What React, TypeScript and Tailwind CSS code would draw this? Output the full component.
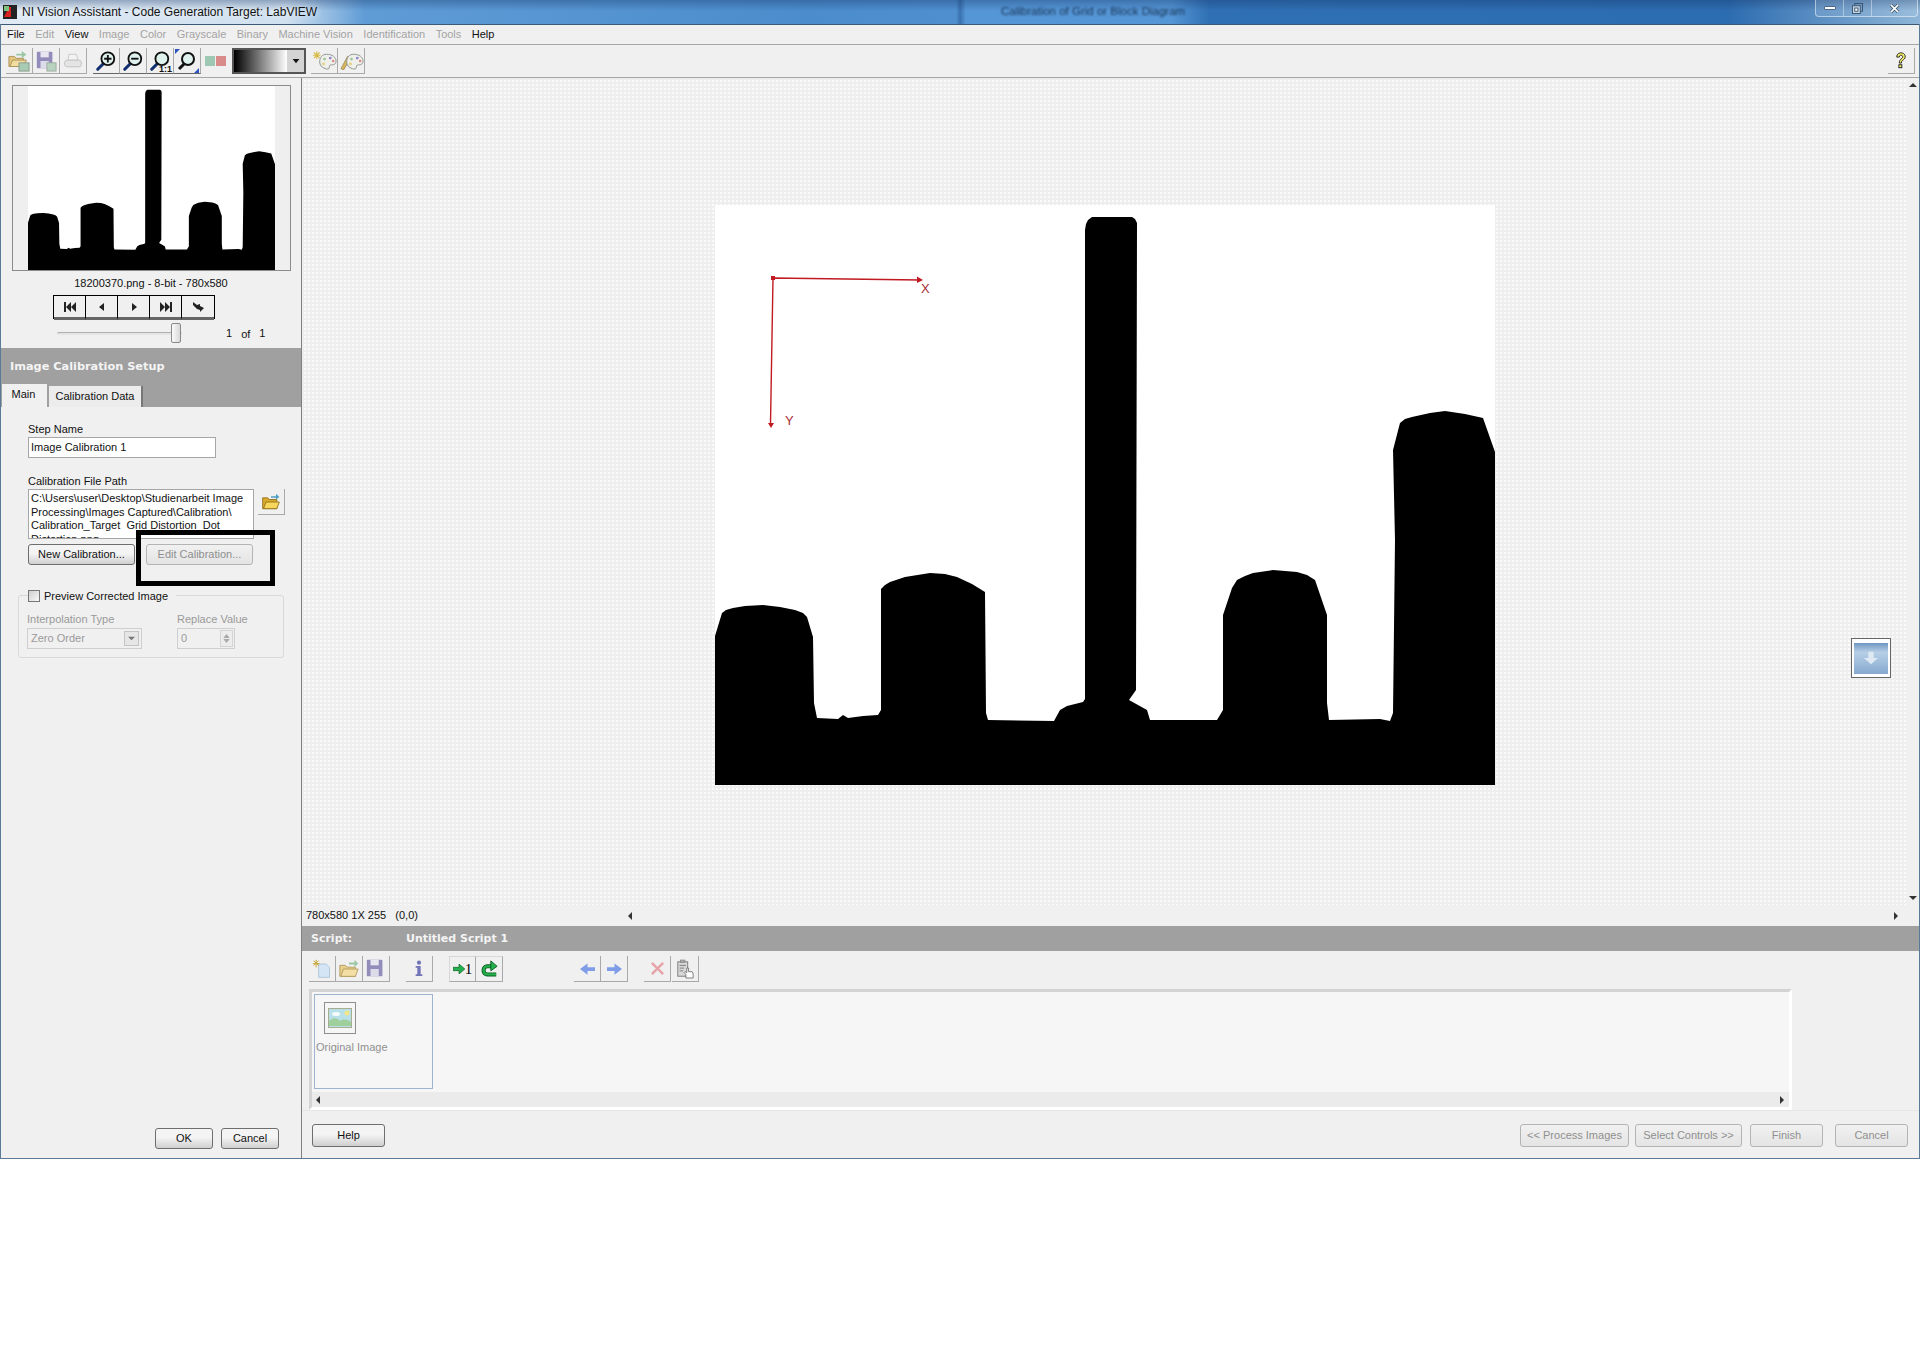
import type { ReactNode } from "react";

const SHAPE =
  "715,785 715,636 722,613 726,610 733,608 745,606 763,605 780,607 795,610 803,613 807,617 813,637 814,703 817,718 838,719 843,715 848,718 863,716 878,715 881,710 881,589 885,585 890,582 905,577 930,573 945,574 957,577 972,584 985,592 986,713 988,720 1054,721 1060,710 1067,706 1083,702 1085,699 1085,230 1086,224 1088,220 1092,217 1132,217 1135,219 1137,223 1136,690 1129,700 1147,710 1150,720 1217,720 1223,710 1223,615 1232,588 1237,580 1245,576 1253,573 1273,570 1297,572 1307,575 1315,580 1327,615 1327,703 1329,720 1380,719 1390,721 1393,713 1395,540 1393,450 1400,423 1405,419 1412,417 1430,413 1445,411 1465,414 1483,418 1495,452 1495,785";

const MENU = [
  { label: "File", on: true },
  { label: "Edit" },
  { label: "View", on: true },
  { label: "Image" },
  { label: "Color" },
  { label: "Grayscale" },
  { label: "Binary" },
  { label: "Machine Vision" },
  { label: "Identification" },
  { label: "Tools" },
  { label: "Help", on: true },
];

function Silhouette() {
  return (
    <svg viewBox="715 205 780 580" className="block h-full w-full" preserveAspectRatio="none">
      <rect x="715" y="205" width="780" height="580" fill="#fff" />
      <polygon points={SHAPE} fill="#000" />
    </svg>
  );
}

function ToolBtn({ children, className = "w-[27px]" }: { children?: ReactNode; className?: string }) {
  return (
    <div className={`flex h-[26px] shrink-0 items-center justify-center border-r border-b border-[#a9a9a9] ${className}`}>
      {children}
    </div>
  );
}

function Lens({ children }: { children?: ReactNode }) {
  return (
    <svg viewBox="0 0 24 24" className="h-[22px] w-[22px]">
      <path d="M9 15 3 21" stroke="#12306f" strokeWidth="3.4" strokeLinecap="round" />
      <circle cx="14" cy="9.5" r="7" fill="#dff2ee" stroke="#111" strokeWidth="2" />
      {children}
    </svg>
  );
}

function FolderIcon() {
  return (
    <svg viewBox="0 0 24 24" className="h-[22px] w-[22px]">
      <path d="M2 8h6l2 2h9v10H2z" fill="#e9cf8a" stroke="#b49c60" />
      <path d="M3 20 6 12h16l-3 8z" fill="#f3dfa4" stroke="#b49c60" />
      <path d="M12 5h6V2l4 4-4 4V7h-6z" fill="#9cc7a4" />
    </svg>
  );
}

function FloppyIcon({ pic }: { pic?: boolean }) {
  return (
    <svg viewBox="0 0 24 24" className="h-[22px] w-[22px] opacity-80">
      <rect x="2" y="2" width="17" height="18" fill="#7b74ad" rx="1" />
      <rect x="6" y="2" width="9" height="6" fill="#e6e4f2" />
      <rect x="6" y="12" width="9" height="8" fill="#d8d6e8" />
      {pic && <rect x="13" y="14" width="10" height="9" fill="#a9cbb4" stroke="#8a9a8a" />}
    </svg>
  );
}

function PictureIcon({ className }: { className: string }) {
  return (
    <svg viewBox="0 0 24 20" className={className}>
      <rect x="0.5" y="0.5" width="23" height="19" fill="#b9e0e8" stroke="#a8ad90" />
      <circle cx="19" cy="5" r="2.5" fill="#f1e68a" />
      <ellipse cx="8" cy="6" rx="4" ry="2" fill="#f5fbfb" />
      <path d="M1 18V13c5-4 8-3 11 0 3-2 7-2 11 1v4z" fill="#9fd09c" />
    </svg>
  );
}

function PaletteIcon({ pen }: { pen?: boolean }) {
  return (
    <svg viewBox="0 0 26 22" className="h-[22px] w-[25px]">
      {pen ? (
        <path d="M2 19 9 6l3 2-7 12z" fill="#d8b65c" stroke="#8b7a4a" strokeWidth="0.7" />
      ) : (
        <path d="M5 1v8M1 5h8M2 2l6 6M8 2 2 8" stroke="#d8bb45" strokeWidth="1.2" />
      )}
      <path d="M15 4c6 0 10 3 10 7s-3 4-5 4-2 2-2 3-2 2-4 1c-4-1-6-4-6-7 0-5 3-8 7-8z" fill="#f0f0ea" stroke="#8d9490" />
      <circle cx="19" cy="8" r="1.5" fill="#8f8ad0" />
      <circle cx="22" cy="11" r="1.3" fill="#d88" />
      <circle cx="13" cy="9" r="1.5" fill="#9ac79a" />
      <circle cx="12" cy="14" r="1.5" fill="#e2cf80" />
    </svg>
  );
}

function NavBtn({ d, last }: { d: string; last?: boolean }) {
  return (
    <div className={`flex h-[24px] w-[32px] items-center justify-center bg-[#f0f0f0] border-b-[3px] border-b-[#666] ${last ? "" : "border-r border-r-black"}`}>
      <svg viewBox="0 0 14 12" className="h-[12px] w-[14px]">
        <path d={d} fill="#222" />
      </svg>
    </div>
  );
}

function PushBtn({ label, className, off }: { label: string; className: string; off?: boolean }) {
  return (
    <div
      className={`flex items-center justify-center rounded-[3px] border ${
        off
          ? "border-[#b4b4b4] bg-[linear-gradient(#f1f1f1,#e4e4e4)] text-[#8f8f8f]"
          : "border-[#6e6e6e] bg-[linear-gradient(#f4f4f4_45%,#cfcfcf)] text-[#111]"
      } ${className}`}
    >
      {label}
    </div>
  );
}

function ScrollTip({ dir }: { dir: "l" | "r" | "u" | "d" }) {
  const d = { l: "M6 1v8L2 5z", r: "M3 1v8l4-4z", u: "M1 7h8L5 3z", d: "M1 3h8L5 7z" }[dir];
  return (
    <svg viewBox="0 0 10 10" className="h-[10px] w-[10px] shrink-0">
      <path d={d} fill="#333" />
    </svg>
  );
}

function LeftPanel() {
  return (
    <aside className="flex w-[301px] shrink-0 flex-col border-r border-[#808080] bg-[#f0f0f0]">
      {/* Thumbnail */}
      <div className="mx-[11px] mt-[7px] flex h-[186px] w-[279px] justify-center border border-[#8b8b8b] bg-[#efefef]">
        <div className="h-full w-[247px]">
          <Silhouette />
        </div>
      </div>
      <div className="flex h-[24px] items-center justify-center">18200370.png - 8-bit - 780x580</div>
      <div className="ml-[52px] flex h-[24px] w-[162px] border border-black">
        <NavBtn d="M1 1h2v10H1zM8 1v10L3 6zM13 1v10L8 6z" />
        <NavBtn d="M9 2v8L4 6z" />
        <NavBtn d="M5 2v8l5-4z" />
        <NavBtn d="M1 1v10l5-5zM6 1v10l5-5zM11 1h2v10h-2z" />
        <NavBtn last d="M2 1 6 4 9 3v2l4 2-4 4V9L6 8 2 4z" />
      </div>
      <div className="flex h-[29px] items-center pl-[56px]">
        <div className="relative h-[3px] w-[125px] rounded-full border-t border-[#b0b0b0] bg-[#e4e4e4]">
          <div className="absolute top-[-10px] left-[114px] h-[20px] w-[10px] rounded-[2px] border border-[#8a8a8a] bg-[linear-gradient(90deg,#fafafa,#d8d8d8)]" />
        </div>
        <span className="ml-[44px]">1</span>
        <span className="ml-[9px] mt-[2px]">of</span>
        <span className="ml-[9px]">1</span>
      </div>

      {/* Step header */}
      <div className="flex h-[59px] flex-col bg-[#a0a0a0]">
        <div className="flex h-[36px] items-center pt-[2px] pl-[9px] font-['DejaVu_Sans'] text-[11.3px] font-bold text-[#f4f4f4]">
          Image Calibration Setup
        </div>
        <div className="flex flex-1 items-end pl-[1px]">
          <div className="flex h-[23px] w-[45px] items-center justify-center bg-[#f0f0f0] pr-[2px] pb-[3px]">Main</div>
          <div className="ml-[2px] flex h-[21px] w-[94px] items-center justify-center border-r-2 border-[#777] bg-[#ececec]">
            Calibration Data
          </div>
        </div>
      </div>

      {/* Form */}
      <div className="relative flex flex-1 flex-col px-[27px]">
        <div className="mt-[15px] h-[14px] leading-[14px]">Step Name</div>
        <div className="mt-px flex h-[21px] w-[188px] items-center border border-[#a6a6a6] bg-white pl-[2px]">Image Calibration 1</div>
        <div className="mt-[16px] h-[14px] leading-[14px]">Calibration File Path</div>
        <div className="mt-px flex gap-[4px]">
          <div className="h-[50px] w-[226px] shrink-0 overflow-hidden border border-[#a6a6a6] bg-white pt-[2px] pl-[2px] leading-[13.500px] whitespace-nowrap">
            <div>C:\Users\user\Desktop\Studienarbeit Image</div>
            <div>Processing\Images Captured\Calibration\</div>
            <div>Calibration_Target&nbsp; Grid Distortion&nbsp; Dot</div>
            <div>Distortion.png</div>
          </div>
          <div className="flex h-[26px] w-[27px] shrink-0 items-center justify-center border-r border-b border-[#a9a9a9]">
            <svg viewBox="0 0 24 24" className="h-[20px] w-[20px]">
              <path d="M2 7h6l2 2h9v11H2z" fill="#d9a92c" stroke="#8a6a14" />
              <path d="M3 20 6 12h16l-3 8z" fill="#f6d65c" stroke="#8a6a14" />
              <path d="M12 5h6V2l4 4-4 3V7h-6z" fill="#4f9fc4" />
            </svg>
          </div>
        </div>
        <div className="mt-[5px] flex gap-[10px]">
          <PushBtn label="New Calibration..." className="h-[21px] w-[107px]" />
          <PushBtn off label="Edit Calibration..." className="ml-px h-[21px] w-[107px]" />
        </div>

        {/* Annotation drawn over the dialog */}
        <div className="absolute top-[123px] left-[135px] h-[56px] w-[139px] border-[5px] border-black" />

        <div className="mt-[30px] -ml-[10px] h-[63px] w-[266px] rounded-[3px] border border-[#d9d9d9]">
          <div className="-mt-[8px] ml-[9px] flex w-fit items-center gap-[4px] bg-[#f0f0f0] pr-[8px]">
            <div className="h-[12px] w-[12px] border border-[#777] bg-[linear-gradient(135deg,#cfcfcf,#f8f8f8)]" />
            <span>Preview Corrected Image</span>
          </div>
          <div className="mt-[7px] ml-[8px] flex gap-[35px] text-[#9a9a9a]">
            <div className="w-[115px]">
              <div className="h-[14px] leading-[14px]">Interpolation Type</div>
              <div className="mt-[2px] flex h-[21px] items-center justify-between border border-[#cfcfcf] pl-[3px]">
                Zero Order
                <div className="mr-[2px] flex h-[15px] w-[15px] items-center justify-center border border-[#c4c4c4] bg-[#e6e6e6]">
                  <svg viewBox="0 0 8 8" className="h-[7px] w-[7px]"><path d="M0 2h8L4 6z" fill="#777" /></svg>
                </div>
              </div>
            </div>
            <div className="w-[58px]">
              <div className="h-[14px] leading-[14px] whitespace-nowrap">Replace Value</div>
              <div className="mt-[2px] flex h-[21px] items-center justify-between border border-[#cfcfcf] pl-[3px]">
                0
                <div className="mr-px flex h-[17px] w-[13px] flex-col items-center justify-center gap-px border border-[#d4d4d4] bg-[#ececec]">
                  <svg viewBox="0 0 8 5" className="h-[4px] w-[7px]"><path d="M0 5h8L4 0z" fill="#aaa" /></svg>
                  <svg viewBox="0 0 8 5" className="h-[4px] w-[7px]"><path d="M0 0h8L4 5z" fill="#aaa" /></svg>
                </div>
              </div>
            </div>
          </div>
        </div>

        <div className="mt-auto mb-[9px] -mr-[5px] flex justify-end gap-[8px]">
          <PushBtn label="OK" className="h-[21px] w-[58px]" />
          <PushBtn label="Cancel" className="h-[21px] w-[58px]" />
        </div>
      </div>
    </aside>
  );
}

function Canvas() {
  return (
    <div className="flex min-h-0 flex-1">
      <div className="relative flex flex-1 items-center justify-center bg-[linear-gradient(90deg,#eeeeee_50%,transparent_50%),linear-gradient(#eeeeee_50%,#fbfbfb_50%)] bg-[length:4px_4px] pt-[7px] pl-[2px]">
        <div className="h-[580px] w-[780px]">
          <svg viewBox="715 205 780 580" className="block h-full w-full">
            <polygon points="715,205 1495,205 1495,785 715,785" fill="#fff" />
            <polygon points={SHAPE} fill="#000" />
            <g stroke="#c01a22" strokeWidth="1.4" fill="#c01a22">
              <path d="M773 278 920 280M773 278 770.5 424" fill="none" />
              <rect x="771" y="276" width="4" height="4" stroke="none" />
              <path d="M917 276.5 923 280 917 283z" stroke="none" />
              <path d="M768 423h6l-3 5z" stroke="none" />
            </g>
            <text x="921" y="293" fontSize="13" fill="#a83038" fontFamily="Liberation Sans, sans-serif">X</text>
            <text x="785" y="425" fontSize="13" fill="#a83038" fontFamily="Liberation Sans, sans-serif">Y</text>
          </svg>
        </div>
        {/* Floating panel toggle */}
        <div className="absolute top-[560px] right-[15px] flex h-[40px] w-[40px] items-center justify-center border border-[#666] bg-white">
          <div className="flex h-[31px] w-[34px] items-center justify-center bg-[linear-gradient(#6f97c4,#b7cfe6_30%,#86a9d0)]">
            <svg viewBox="0 0 18 18" className="h-[16px] w-[18px]">
              <path d="M6 2h6v7h5l-8 7-8-7h5z" fill="#dfe9f3" />
            </svg>
          </div>
        </div>
      </div>
      <div className="flex w-[13px] flex-col items-center justify-between bg-[#f0f0f0] py-[2px]">
        <ScrollTip dir="u" />
        <ScrollTip dir="d" />
      </div>
    </div>
  );
}

function ScriptTools() {
  return (
    <div className="flex h-[38px] shrink-0 items-start pt-[5px] pl-[7px]">
      <ToolBtn>
        <svg viewBox="0 0 24 24" className="h-[20px] w-[20px]">
          <path d="M8 6h9l4 4v12H8z" fill="#d4e6f5" stroke="#a9bfd3" />
          <path d="M5 1v9M1 5.500h8M2 2l6 6M8 2 2 8" stroke="#c7a83a" strokeWidth="1.2" />
        </svg>
      </ToolBtn>
      <ToolBtn><FolderIcon /></ToolBtn>
      <ToolBtn><FloppyIcon /></ToolBtn>
      <ToolBtn className="ml-[16px] w-[27px]">
        <svg viewBox="0 0 12 20" className="h-[17px] w-[10px]">
          <circle cx="6" cy="3" r="2.500" fill="#7274b8" />
          <path d="M2 7h6v10h2v2H2v-2h2V9H2z" fill="#7274b8" />
        </svg>
      </ToolBtn>
      <ToolBtn className="ml-[16px] w-[27px] border-t border-l border-t-[#d8d8d8] border-l-[#d8d8d8]">
        <div className="flex items-center">
          <svg viewBox="0 0 14 12" className="h-[10px] w-[12px]"><path d="M0 4h7V0l7 6-7 6V8H0z" fill="#22b14c" stroke="#0a5a1f" strokeWidth="0.8" /></svg>
          <span className="font-['Liberation_Serif'] text-[15px] leading-none text-black">1</span>
        </div>
      </ToolBtn>
      <ToolBtn className="w-[27px] border-t border-t-[#d8d8d8]">
        <svg viewBox="0 0 20 20" className="h-[18px] w-[18px]">
          <path d="M15 7H8a4 4 0 0 0-4 4v1a4 4 0 0 0 4 4h10" fill="none" stroke="#0a5a1f" strokeWidth="4.500" />
          <path d="M15 7H8a4 4 0 0 0-4 4v1a4 4 0 0 0 4 4h10" fill="none" stroke="#22b14c" strokeWidth="2.500" />
          <path d="M12 1l7 6-7 5z" fill="#22b14c" stroke="#0a5a1f" />
        </svg>
      </ToolBtn>
      <ToolBtn className="ml-[71px] w-[27px]">
        <svg viewBox="0 0 16 12" className="h-[12px] w-[15px]"><path d="M16 4H8V0L0 6l8 6V8h8z" fill="#7f9ce8" /></svg>
      </ToolBtn>
      <ToolBtn className="w-[27px]">
        <svg viewBox="0 0 16 12" className="h-[12px] w-[15px]"><path d="M0 4h8V0l8 6-8 6V8H0z" fill="#7f9ce8" /></svg>
      </ToolBtn>
      <ToolBtn className="ml-[16px] w-[27px]">
        <svg viewBox="0 0 16 16" className="h-[15px] w-[15px]"><path d="M2 2l12 12M14 2 2 14" stroke="#e6a3a8" strokeWidth="2.600" /></svg>
      </ToolBtn>
      <ToolBtn className="ml-px w-[27px]">
        <svg viewBox="0 0 20 22" className="h-[20px] w-[18px]">
          <rect x="2" y="3" width="11" height="16" fill="#d8d8d8" stroke="#777" />
          <rect x="5" y="1" width="5" height="3" fill="#aaa" stroke="#777" strokeWidth="0.6" />
          <path d="M4 7h7M4 10h5M4 13h4" stroke="#777" />
          <path d="M11 21v-4l-2-2 1-1 2 1v-5h2v4h4l1 2v5z" fill="#fff" stroke="#555" strokeWidth="0.8" />
        </svg>
      </ToolBtn>
    </div>
  );
}

export default function App() {
  return (
    <div className="h-[1358px] bg-white font-['Liberation_Sans',sans-serif] text-[11px] text-[#111]">
      <div className="flex h-[1159px] flex-col bg-[#f0f0f0]">
        {/* Title bar */}
        <header className="flex h-[24px] shrink-0 items-center bg-[linear-gradient(180deg,rgba(20,50,100,0.35),transparent_45%),linear-gradient(90deg,#dfeaf4_0,#cfe0ef_15%,#5f9cd6_19%,#4b8ccc_42%,#4f8fd0_49.8%,#3a70ae_50%,#5596d6_50.3%,#5596d6_61%,#2f70b4_63%,#2c6cb0_90%,#8fb6d8_100%)]">
          <svg viewBox="0 0 14 14" className="ml-[3px] h-[14px] w-[14px] shrink-0">
            <rect width="14" height="14" fill="#222" />
            <path d="M1 12 6 2h2v10z" fill="#d92020" />
            <rect x="1" y="1" width="5" height="5" fill="#7fc27f" />
          </svg>
          <span className="ml-[5px] text-[12px] [text-shadow:0_0_6px_#fff]">NI Vision Assistant - Code Generation Target: LabVIEW</span>
          <span className="ml-[684px] text-[11.5px] text-[#16304f] blur-[1.2px]">Calibration of Grid or Block Diagram</span>
          <div className="mr-[2px] ml-auto flex h-[17px] self-start rounded-b-[4px] border-x border-b border-white/50 bg-white/10">
            <div className="flex w-[28px] items-center justify-center border-r border-white/40">
              <div className="h-[4px] w-[12px] rounded-[1px] border border-[#4a6a8a] bg-white" />
            </div>
            <div className="flex w-[28px] items-center justify-center border-r border-white/40">
              <svg viewBox="0 0 12 12" className="h-[11px] w-[11px]">
                <rect x="3" y="0.500" width="8.500" height="8.500" fill="none" stroke="#34506c" />
                <rect x="0.500" y="3" width="8.500" height="8.500" fill="#c8d8e6" stroke="#34506c" />
                <rect x="3" y="5.500" width="3.500" height="3.500" fill="#fff" stroke="#34506c" />
              </svg>
            </div>
            <div className="flex w-[45px] items-center justify-center">
              <svg viewBox="0 0 12 12" className="h-[11px] w-[11px]">
                <path d="M2 2l8 8M10 2 2 10" stroke="#34506c" strokeWidth="3.400" />
                <path d="M2 2l8 8M10 2 2 10" stroke="#fff" strokeWidth="1.800" />
              </svg>
            </div>
          </div>
        </header>

        <div className="flex min-h-0 flex-1 flex-col border-x border-b border-[#5b7a96]">
          {/* Menu */}
          <nav className="flex h-[20px] shrink-0 items-center gap-[10.500px] border-t border-[#3a5a78] pl-[6px]">
            {MENU.map(({ label, on }) => (
              <span key={label} className={on ? "text-[#111]" : "text-[#a3a3a3]"}>{label}</span>
            ))}
          </nav>

          {/* Main toolbar */}
          <div className="flex h-[34px] shrink-0 items-center border-t border-b border-[#a6a6a6] pl-[5px]">
            <ToolBtn>
              <svg viewBox="0 0 24 24" className="h-[22px] w-[22px]"><path d="M1 7h6l2 2h8v9H1z" fill="#e3c67e" stroke="#a8925a" /><path d="M2 18 5 11h15l-3 7z" fill="#f2dc9f" stroke="#a8925a" /><path d="M9 4h6V1l5 4-5 4V6H9z" fill="#9cc7a4" /><rect x="12" y="14" width="11" height="9" fill="#a9cbb4" stroke="#8a9a8a" /></svg>
            </ToolBtn>
            <ToolBtn><FloppyIcon pic /></ToolBtn>
            <ToolBtn>
              <svg viewBox="0 0 24 24" className="h-[20px] w-[20px]"><path d="M7 4h9l2 7H6z" fill="#f3f3f3" stroke="#c4c4c4" /><rect x="2" y="11" width="20" height="8" rx="3" fill="#e4e4e4" stroke="#bcbcbc" /></svg>
            </ToolBtn>
            <ToolBtn className="ml-[6px] w-[27px] border-b-[#666]">
              <Lens><path d="M10 9.500h8M14 5.500v8" stroke="#111" strokeWidth="2" /></Lens>
            </ToolBtn>
            <ToolBtn className="w-[27px] border-b-[#666]">
              <Lens><path d="M10 9.500h8" stroke="#111" strokeWidth="2" /></Lens>
            </ToolBtn>
            <ToolBtn className="relative w-[27px] border-b-[#666]">
              <Lens />
              <span className="absolute right-[1px] bottom-[-1px] text-[9px] leading-none font-bold">1:1</span>
            </ToolBtn>
            <ToolBtn className="w-[27px] border-b-[#666]">
              <svg viewBox="0 0 24 24" className="h-[24px] w-[24px]">
                <path d="M9 15 4 20" stroke="#111" strokeWidth="3" />
                <circle cx="13" cy="10" r="6" fill="#dff2ee" stroke="#111" strokeWidth="2" />
                <path d="M0 0h5L0 5zM24 24h-5l5-5z" fill="#2a55c0" />
              </svg>
            </ToolBtn>
            <div className="flex w-[28px] items-center justify-center gap-px">
              <svg viewBox="0 0 10 10" className="h-[10px] w-[10px]"><rect width="10" height="10" fill="#9fc8b4" /></svg>
              <svg viewBox="0 0 10 10" className="h-[10px] w-[10px]"><rect width="10" height="10" fill="#d98a8a" /></svg>
            </div>
            <div className="ml-[3px] flex h-[26px] w-[74px] border-2 border-[#555]">
              <div className="flex-1 bg-[linear-gradient(90deg,#000,#fff)]" />
              <div className="flex w-[17px] items-center justify-center bg-[#d4d4d4]">
                <svg viewBox="0 0 8 6" className="h-[5px] w-[8px]"><path d="M0 0h8L4 5z" fill="#111" /></svg>
              </div>
            </div>
            <ToolBtn className="ml-[5px] w-[27px]"><PaletteIcon /></ToolBtn>
            <ToolBtn className="w-[27px]"><PaletteIcon pen /></ToolBtn>
            <ToolBtn className="ml-auto mr-[4px] w-[27px]">
              <svg viewBox="0 0 14 20" className="h-[17px] w-[12px]">
                <path d="M2 6a5 4.500 0 1 1 8 3c-2 1.500-2.500 2-2.500 4H5c0-3 1-4 3-5.500A2 2 0 1 0 5 6z" fill="#f6ee6a" stroke="#111" />
                <rect x="4.500" y="15" width="3.500" height="3.500" fill="#f6ee6a" stroke="#111" />
              </svg>
            </ToolBtn>
          </div>

          <div className="flex min-h-0 flex-1">
            <LeftPanel />

            <main className="flex min-w-0 flex-1 flex-col">
              <Canvas />

              {/* Status row */}
              <div className="flex h-[21px] shrink-0 items-center">
                <span className="w-[323px] shrink-0 pl-[4px] whitespace-pre">780x580 1X 255   (0,0)</span>
                <div className="mr-[13px] flex h-[15px] flex-1 items-center justify-between bg-[#f0f0f0] pr-[5px] pl-[1px]">
                  <ScrollTip dir="l" />
                  <ScrollTip dir="r" />
                </div>
              </div>

              {/* Script header */}
              <div className="flex h-[25px] shrink-0 items-center bg-[#a0a0a0] pt-[2px] font-['DejaVu_Sans'] text-[11px] font-bold text-[#f4f4f4]">
                <span className="w-[104px] pl-[9px]">Script:</span>
                <span>Untitled Script 1</span>
              </div>

              <ScriptTools />

              {/* Script steps */}
              <div className="ml-[7px] h-[121px] w-[1483px] shrink-0 border-t-[3px] border-r-[3px] border-b-[3px] border-l-[3px] border-t-[#d4d4d4] border-r-white border-b-white border-l-[#d4d4d4] bg-[#f6f6f6]">
                <div className="h-[100px] pt-[2px] pl-[2px]">
                  <div className="h-[95px] w-[119px] border border-[#9db3cf] pt-[7px]">
                    <div className="ml-[9px] flex h-[32px] w-[32px] items-center justify-center border border-[#8f8f8f]">
                      <PictureIcon className="h-[20px] w-[24px]" />
                    </div>
                    <div className="mt-[5px] ml-[1px] whitespace-nowrap text-[#909090]">Original Image</div>
                  </div>
                </div>
                <div className="flex h-[15px] items-center justify-between bg-[#ebebeb] px-[2px]">
                  <ScrollTip dir="l" />
                  <ScrollTip dir="r" />
                </div>
              </div>

              {/* Wizard buttons */}
              <div className="flex h-[48px] shrink-0 items-center border-t border-[#e6e6e6] pt-[2px]">
                <PushBtn label="Help" className="ml-[10px] h-[23px] w-[73px]" />
                <div className="mr-[11px] ml-auto flex gap-[6px]">
                  <PushBtn off label="<< Process Images" className="h-[23px] w-[109px]" />
                  <PushBtn off label="Select Controls >>" className="h-[23px] w-[107px]" />
                  <PushBtn off label="Finish" className="ml-[2px] h-[23px] w-[73px]" />
                  <PushBtn off label="Cancel" className="ml-[6px] h-[23px] w-[73px]" />
                </div>
              </div>
            </main>
          </div>
        </div>
      </div>
    </div>
  );
}
